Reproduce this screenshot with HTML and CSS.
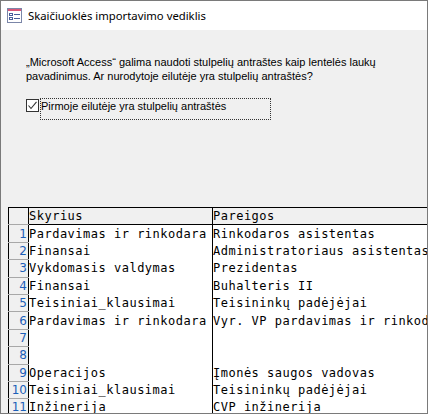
FILE: index.html
```html
<!DOCTYPE html>
<html lang="lt">
<head>
<meta charset="utf-8">
<title>Skaičiuoklės importavimo vediklis</title>
<link rel="stylesheet" href="styles.css">
</head>
<body>
<div class="window">
  <div class="titlebar">
    <svg class="app-icon" width="15" height="15" viewBox="0 0 15 15">
      <rect x="0.5" y="0.5" width="14" height="14" fill="#ffffff" stroke="#7b86a8"/>
      <rect x="1" y="1" width="13" height="2" fill="#d9577a"/>
      <rect x="2.5" y="5.5" width="3" height="2" fill="none" stroke="#4a5f9c"/>
      <rect x="2.5" y="9.5" width="3" height="2" fill="none" stroke="#4a5f9c"/>
      <rect x="7" y="6" width="6" height="1" fill="#4a5f9c"/>
      <rect x="7" y="10" width="6" height="1" fill="#4a5f9c"/>
    </svg>
    <span class="title">Skaičiuoklės importavimo vediklis</span>
  </div>
  <div class="content">
    <p class="intro">„Microsoft Access“ galima naudoti stulpelių antraštes kaip lentelės laukų pavadinimus. Ar nurodytoje eilutėje yra stulpelių antraštės?</p>
    <label class="check-row">
      <span class="checkbox">
        <svg width="13" height="13" viewBox="0 0 13 13"><rect x="0.5" y="0.5" width="12" height="12" fill="#ffffff" stroke="#333333"/><path d="M2.5 6.5 L5 9.5 L10.5 2.8" fill="none" stroke="#333333" stroke-width="1.1"/></svg>
      </span>
      <span class="check-label">Pirmoje eilutėje yra stulpelių antraštės</span>
    </label>
    <div class="grid-wrap">
      <table class="grid">
        <thead>
          <tr><th class="num"></th><th class="c1">Skyrius</th><th class="c2">Pareigos</th></tr>
        </thead>
        <tbody>
          <tr><td class="num">1</td><td class="c1">Pardavimas ir rinkodara</td><td class="c2">Rinkodaros asistentas</td></tr>
          <tr><td class="num">2</td><td class="c1">Finansai</td><td class="c2">Administratoriaus asistentas</td></tr>
          <tr><td class="num">3</td><td class="c1">Vykdomasis valdymas</td><td class="c2">Prezidentas</td></tr>
          <tr><td class="num">4</td><td class="c1">Finansai</td><td class="c2">Buhalteris II</td></tr>
          <tr><td class="num">5</td><td class="c1">Teisiniai_klausimai</td><td class="c2">Teisininkų padėjėjai</td></tr>
          <tr><td class="num">6</td><td class="c1">Pardavimas ir rinkodara</td><td class="c2">Vyr. VP pardavimas ir rinkodara</td></tr>
          <tr><td class="num">7</td><td class="c1"></td><td class="c2"></td></tr>
          <tr><td class="num">8</td><td class="c1"></td><td class="c2"></td></tr>
          <tr><td class="num">9</td><td class="c1">Operacijos</td><td class="c2">Įmonės saugos vadovas</td></tr>
          <tr><td class="num">10</td><td class="c1">Teisiniai_klausimai</td><td class="c2">Teisininkų padėjėjai</td></tr>
          <tr><td class="num">11</td><td class="c1">Inžinerija</td><td class="c2">CVP inžinerija</td></tr>
        </tbody>
      </table>
    </div>
  </div>
</div>
</body>
</html>
```
FILE: styles.css
```css
* { box-sizing: border-box; }
html, body { margin: 0; padding: 0; }
body { width: 428px; height: 414px; overflow: hidden; background: #ffffff; }

.window {
  width: 428px;
  height: 414px;
  border: 1px solid #7a7a7a;
  display: flex;
  flex-direction: column;
  overflow: hidden;
  background: #f0f0f0;
}

.titlebar {
  height: 29px;
  flex: none;
  background: #ffffff;
  display: flex;
  align-items: center;
  padding-left: 6px;
  gap: 6px;
}
.app-icon { display: block; flex: none; }
.title {
  font-family: "Noto Sans", "Open Sans", sans-serif;
  font-size: 11.3px;
  color: #000000;
  white-space: nowrap;
}

.content {
  flex: 1;
  display: flex;
  flex-direction: column;
  background: #f0f0f0;
  min-height: 0;
}

.intro {
  margin: 25px 30px 0 25px;
  font-family: "Liberation Sans", Arial, sans-serif;
  font-size: 11px;
  line-height: 14px;
  color: #000000;
}

.check-row {
  margin: 15px 0 0 25px;
  display: flex;
  align-items: flex-start;
  font-family: "Liberation Sans", Arial, sans-serif;
  font-size: 11px;
  color: #000000;
}
.checkbox { display: block; width: 13px; height: 13px; margin-top: 1px; flex: none; }
.checkbox svg { display: block; }
.check-label {
  width: 231px;
  height: 22px;
  margin-left: 1px;
  padding: 0;
  line-height: 14px;
  border: 1px dotted #333333;
}

.grid-wrap {
  margin: 87px 0 0 7px;
  overflow: hidden;
  flex: 1;
  min-height: 0;
}

.grid {
  border-collapse: collapse;
  table-layout: fixed;
  width: 470px;
  background: #ffffff;
  font-family: "DejaVu Sans Mono", monospace;
  font-size: 12px;
  letter-spacing: 0.5px;
  color: #000000;
  border-left: 1px solid #000000;
  border-top: 1px solid #000000;
}
.grid th, .grid td {
  height: 17.4px;
  padding: 0;
  text-align: left;
  font-weight: normal;
  white-space: nowrap;
  overflow: hidden;
  vertical-align: middle;
  line-height: 14px;
}
.grid thead th {
  background: #f0f0f0;
  border-bottom: 1px solid #000000;
}
.grid .num {
  width: 20px;
  background: #f0f0f0;
  color: #1c5fb8;
  text-align: right;
  letter-spacing: 0;
  font-family: "DejaVu Sans", sans-serif;
  font-size: 12px;
  padding-right: 1px;
  border-right: 1px solid #000000;
  border-bottom: 1px solid #a8a8a8;
}
.grid tbody tr:first-child .num { border-top: 1px solid #000000; }
.grid .c1 {
  width: 184px;
  border-right: 1px solid #000000;
}
.grid .c2 {
  width: 266px;
}
```
